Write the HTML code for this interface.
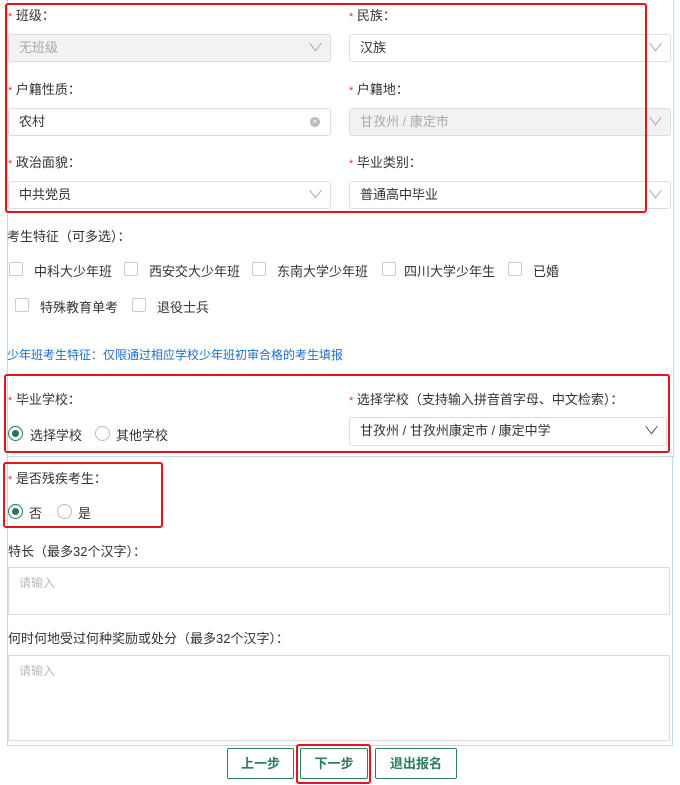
<!DOCTYPE html>
<html><head><meta charset="utf-8"><style>
*{box-sizing:border-box;margin:0;padding:0}
body{width:680px;height:785px;background:#fff;position:relative;overflow:hidden;font-family:"Liberation Sans","Noto Sans CJK SC",sans-serif;font-size:13px;color:#333}
.a{position:absolute;white-space:nowrap}
.st{color:#e33;font-size:11px}
.sel{position:absolute;height:28px;border:1px solid #ddd;border-radius:3px;background:#fff;padding-left:10px;line-height:26px;font-size:13px;color:#333}
.sel.dis{background:#f2f2f2;color:#aaa}
.sel .ar{position:absolute;right:9px;top:0;color:#aaa;font-size:11px;transform:scaleX(1.5)}
.red{position:absolute;border:2px solid #e3141c;border-radius:3px}
.cb{position:absolute;width:14px;height:14px;border:1px solid #ccc;border-radius:2px;background:#fff}
.rd{position:absolute;width:15px;height:15px;border:1px solid #bbb;border-radius:50%}
.rd.on{border-color:#1e7a5a}
.rd.on:after{content:"";position:absolute;left:3px;top:3px;width:7px;height:7px;border-radius:50%;background:#1e7a5a}
.ta{position:absolute;border:1px solid #ddd;background:#fff;color:#bbb;padding:6px 10px;font-size:12px}
.btn{position:absolute;height:31px;border:1px solid #2e7d5b;border-radius:2px;color:#2e7d5b;font-size:13px;font-weight:bold;text-align:center;line-height:29px;background:#fff}
</style></head><body>
<div class="a" style="left:7px;top:0;width:667px;height:458px;border-left:1px solid #b8dcf0;border-right:1px solid #b8dcf0"></div>
<div class="a" style="left:7px;top:456px;width:666px;height:290px;border:1px solid #b8dcf0"></div>

<div class="a" style="left:8px;top:5px"><span class="st">*</span> 班级：</div>
<div class="a" style="left:349px;top:5px"><span class="st">*</span> 民族：</div>
<div class="sel dis" style="left:8px;top:34px;width:323px">无班级<span class="ar">∨</span></div>
<div class="sel" style="left:349px;top:34px;width:322px">汉族<span class="ar">∨</span></div>

<div class="a" style="left:8px;top:79px"><span class="st">*</span> 户籍性质：</div>
<div class="a" style="left:349px;top:79px"><span class="st">*</span> 户籍地：</div>
<div class="sel" style="left:8px;top:108px;width:323px">农村<span style="position:absolute;right:10px;top:8px;width:10px;height:10px;border-radius:50%;background:#bbb;color:#fff;font-size:8px;line-height:10px;text-align:center">×</span></div>
<div class="sel dis" style="left:349px;top:108px;width:322px">甘孜州 / 康定市<span class="ar">∨</span></div>

<div class="a" style="left:8px;top:152px"><span class="st">*</span> 政治面貌：</div>
<div class="a" style="left:349px;top:152px"><span class="st">*</span> 毕业类别：</div>
<div class="sel" style="left:8px;top:181px;width:323px">中共党员<span class="ar">∨</span></div>
<div class="sel" style="left:349px;top:181px;width:322px">普通高中毕业<span class="ar">∨</span></div>
<div class="red" style="left:5px;top:3px;width:642px;height:210px"></div>

<div class="a" style="left:7px;top:226px">考生特征（可多选）：</div>
<div class="cb" style="left:9px;top:262px"></div><div class="a" style="left:34px;top:261px">中科大少年班</div>
<div class="cb" style="left:124px;top:262px"></div><div class="a" style="left:149px;top:261px">西安交大少年班</div>
<div class="cb" style="left:252px;top:262px"></div><div class="a" style="left:277px;top:261px">东南大学少年班</div>
<div class="cb" style="left:382px;top:262px"></div><div class="a" style="left:404px;top:261px">四川大学少年生</div>
<div class="cb" style="left:508px;top:262px"></div><div class="a" style="left:533px;top:261px">已婚</div>
<div class="cb" style="left:15px;top:298px"></div><div class="a" style="left:40px;top:297px">特殊教育单考</div>
<div class="cb" style="left:132px;top:298px"></div><div class="a" style="left:157px;top:297px">退役士兵</div>
<div class="a" style="left:7px;top:346px;color:#1b6fd1;font-size:12px">少年班考生特征：仅限通过相应学校少年班初审合格的考生填报</div>

<div class="a" style="left:8px;top:389px"><span class="st">*</span> 毕业学校：</div>
<div class="a" style="left:349px;top:389px"><span class="st">*</span> 选择学校（支持输入拼音首字母、中文检索）：</div>
<div class="rd on" style="left:8px;top:426px"></div><div class="a" style="left:30px;top:425px">选择学校</div>
<div class="rd" style="left:95px;top:426px"></div><div class="a" style="left:116px;top:425px">其他学校</div>
<div class="sel" style="left:349px;top:417px;width:318px;height:29px">甘孜州 / 甘孜州康定市 / 康定中学<span class="ar" style="color:#555">∨</span></div>
<div class="red" style="left:4px;top:374px;width:666px;height:79px"></div>

<div class="a" style="left:8px;top:468px"><span class="st">*</span> 是否残疾考生：</div>
<div class="rd on" style="left:8px;top:504px"></div><div class="a" style="left:29px;top:503px">否</div>
<div class="rd" style="left:57px;top:504px"></div><div class="a" style="left:78px;top:503px">是</div>
<div class="red" style="left:3px;top:462px;width:160px;height:66px"></div>

<div class="a" style="left:8px;top:541px">特长（最多32个汉字）：</div>
<div class="ta" style="left:8px;top:567px;width:662px;height:48px">请输入</div>
<div class="a" style="left:8px;top:628px">何时何地受过何种奖励或处分（最多32个汉字）：</div>
<div class="ta" style="left:8px;top:655px;width:662px;height:86px">请输入</div>

<div class="btn" style="left:227px;top:748px;width:67px">上一步</div>
<div class="btn" style="left:300px;top:748px;width:68px">下一步</div>
<div class="red" style="left:296px;top:744px;width:75px;height:40px"></div>
<div class="btn" style="left:375px;top:748px;width:82px">退出报名</div>
</body></html>
